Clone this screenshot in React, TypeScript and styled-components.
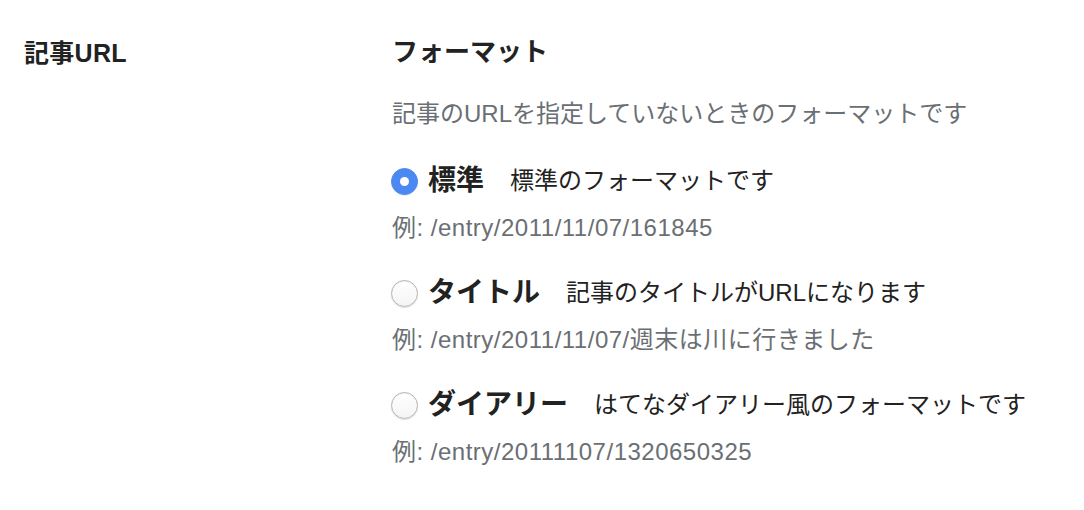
import React, { useState } from "react";
import styled, { createGlobalStyle } from "styled-components";

const GlobalStyle = createGlobalStyle`
  html, body {
    margin: 0;
    padding: 0;
    background: #ffffff;
  }
  body {
    font-family: "Liberation Sans", "Noto Sans CJK JP", sans-serif;
    color: #222;
  }
`;

const Page = styled.div`
  display: grid;
  grid-template-columns: 368px 1fr;
  padding: 31px 24px 0 24px;
`;

const SectionTitle = styled.h2`
  margin: 0;
  font-size: 25px;
  letter-spacing: 0.3px;
  font-weight: 700;
  line-height: 44px;
  color: #222;
`;

const Fields = styled.div`
  display: flex;
  flex-direction: column;
`;

const FieldTitle = styled.h3`
  margin: 0;
  font-size: 26px;
  font-weight: 700;
  line-height: 42px;
  color: #222;
`;

const Description = styled.p`
  margin: 23px 0 0;
  font-size: 24px;
  line-height: 36px;
  color: #6a6f74;
`;

const Options = styled.div`
  display: flex;
  flex-direction: column;
  gap: 27px;
  margin-top: 29px;
`;

const Option = styled.label`
  display: flex;
  flex-direction: column;
  gap: 9px;
  cursor: pointer;
`;

const OptionRow = styled.span`
  display: flex;
  align-items: center;
  gap: 10px;
  height: 40px;
  line-height: 40px;
`;

const RadioInput = styled.input.attrs({ type: "radio" })`
  appearance: none;
  margin: 0 0 0 -1px;
  width: 27px;
  height: 27px;
  border-radius: 50%;
  flex: none;
  box-sizing: border-box;
  background: linear-gradient(#ffffff, #f4f4f4);
  border: 1px solid #b3b3b3;
  box-shadow: 0 1px 1px rgba(0, 0, 0, 0.12), inset 0 1px 1px rgba(0, 0, 0, 0.05);
  display: grid;
  place-items: center;

  &:checked {
    background: #4b88f2;
    border-color: #4b88f2;
    box-shadow: 0 1px 1px rgba(0, 0, 0, 0.08);
  }
  &:checked::after {
    content: "";
    width: 9px;
    height: 9px;
    border-radius: 50%;
    background: #ffffff;
  }
`;

const OptionName = styled.span`
  font-size: 28px;
  font-weight: 700;
  color: #222;
  margin-right: 16px;
`;

const OptionNote = styled.span`
  font-size: 24px;
  color: #222;
`;

const Example = styled.span`
  font-size: 24px;
  letter-spacing: 0.5px;
  line-height: 36px;
  color: #6a6f74;
`;

type Format = {
  id: string;
  name: string;
  note: string;
  example: string;
};

const formats: Format[] = [
  {
    id: "standard",
    name: "標準",
    note: "標準のフォーマットです",
    example: "例: /entry/2011/11/07/161845",
  },
  {
    id: "title",
    name: "タイトル",
    note: "記事のタイトルがURLになります",
    example: "例: /entry/2011/11/07/週末は川に行きました",
  },
  {
    id: "diary",
    name: "ダイアリー",
    note: "はてなダイアリー風のフォーマットです",
    example: "例: /entry/20111107/1320650325",
  },
];

export default function App() {
  const [selected, setSelected] = useState("standard");
  return (
    <>
      <GlobalStyle />
      <Page>
        <SectionTitle>記事URL</SectionTitle>
        <Fields>
          <FieldTitle>フォーマット</FieldTitle>
          <Description>記事のURLを指定していないときのフォーマットです</Description>
          <Options>
            {formats.map((f) => (
              <Option key={f.id}>
                <OptionRow>
                  <RadioInput
                    name="url-format"
                    value={f.id}
                    checked={selected === f.id}
                    onChange={() => setSelected(f.id)}
                  />
                  <OptionName>{f.name}</OptionName>
                  <OptionNote>{f.note}</OptionNote>
                </OptionRow>
                <Example>{f.example}</Example>
              </Option>
            ))}
          </Options>
        </Fields>
      </Page>
    </>
  );
}
